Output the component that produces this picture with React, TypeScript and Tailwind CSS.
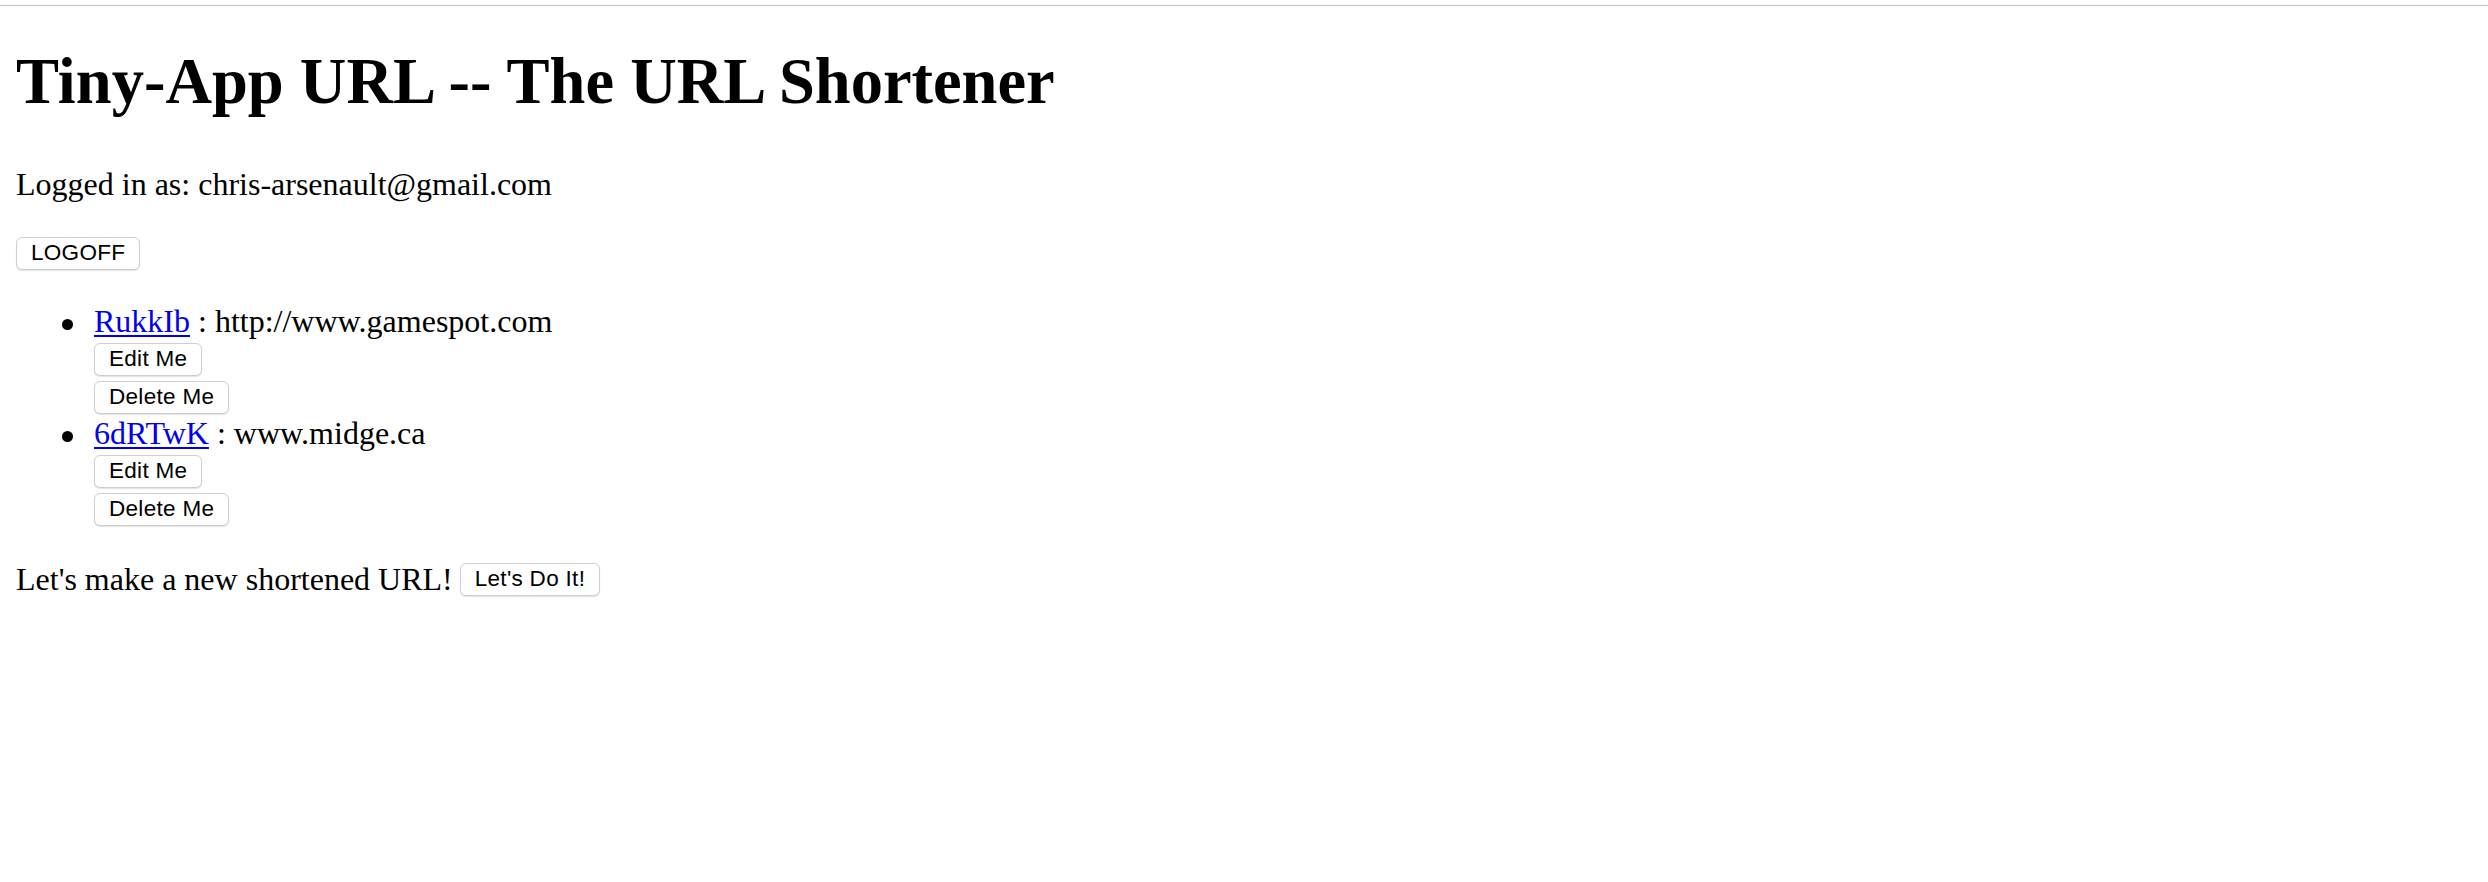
// Tiny-App URL index page

const serif = 'font-["Liberation_Serif","Times_New_Roman",serif]';

function Btn({ label }: { label: string }) {
  return (
    <button className='h-[33px] px-[14px] bg-white border border-[#cfcfcf] rounded-[6px] shadow-[0_1px_1px_rgba(0,0,0,0.12)] font-["Liberation_Sans",Arial,sans-serif] text-[22.5px] leading-none tracking-[0.3px] text-black'>
      {label}
    </button>
  );
}

const urls = [
  { id: 'RukkIb', long: 'http://www.gamespot.com' },
  { id: '6dRTwK', long: 'www.midge.ca' },
];

export default function App() {
  return (
    <div className={`min-h-[882px] bg-white text-black ${serif}`}>
      {/* browser chrome edge */}
      <div className="h-[5px]" />
      <div className="h-px bg-[#c4c4c4]" />

      <div className="pl-4">
        <h1 className="mt-[44px] text-[64.5px] leading-none font-bold whitespace-nowrap">
          Tiny-App URL -- The URL Shortener
        </h1>

        <p className="mt-[53px] text-[32px] leading-[32px]">
          Logged in as: chris-arsenault@gmail.com
        </p>

        <div className="mt-[37px]">
          <Btn label="LOGOFF" />
        </div>

        {/* url list */}
        <ul className="mt-[35px] flex flex-col gap-[3px]">
          {urls.map((u) => (
            <li key={u.id} className="flex">
              <span className="w-[78px] shrink-0 flex justify-end pr-[21px]">
                <span className="mt-[14px] w-[11px] h-[11px] rounded-full bg-black" />
              </span>
              <div className="flex flex-col items-start">
                <div className="text-[32px] leading-[32px] whitespace-nowrap">
                  <a href="#" className="text-[#0000ee] underline underline-offset-[3px] decoration-[2px]">
                    {u.id}
                  </a>{' '}
                  : {u.long}
                </div>
                <div className="mt-[6px]">
                  <Btn label="Edit Me" />
                </div>
                <div className="mt-[5px]">
                  <Btn label="Delete Me" />
                </div>
              </div>
            </li>
          ))}
        </ul>

        <div className="mt-[37px] flex items-center gap-[7px]">
          <span className="text-[32px] leading-[32px] whitespace-nowrap">Let's make a new shortened URL!</span>
          <Btn label="Let's Do It!" />
        </div>
      </div>
    </div>
  );
}
